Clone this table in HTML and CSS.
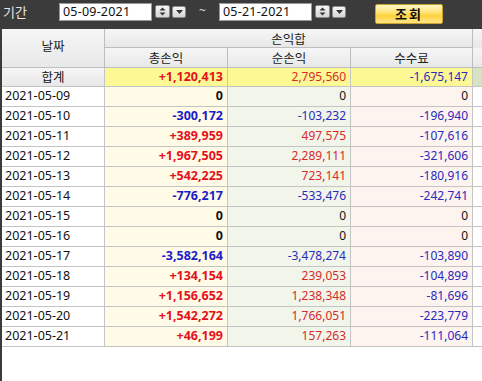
FILE: index.html
```html
<!DOCTYPE html>
<html lang="ko">
<head>
<meta charset="utf-8">
<link rel="stylesheet" href="styles.css">
</head>
<body>
<div class="app">
  <div class="toolbar">
    <span class="label">기간</span>
    <div class="datebox">
      <span class="dateval">05-09-2021</span>
    </div>
    <span class="spin"><svg width="13" height="11" viewBox="0 0 13 11"><path d="M6.5 1.5 L9.5 4.5 L3.5 4.5 Z" fill="#333"/><path d="M3.5 6.5 L9.5 6.5 L6.5 9.5 Z" fill="#333"/></svg></span>
    <span class="drop"><svg width="7" height="4" viewBox="0 0 7 4"><path d="M0 0 H7 L3.5 4 Z" fill="#333"/></svg></span>
    <span class="tilde">~</span>
    <div class="datebox">
      <span class="dateval">05-21-2021</span>
    </div>
    <span class="spin"><svg width="13" height="11" viewBox="0 0 13 11"><path d="M6.5 1.5 L9.5 4.5 L3.5 4.5 Z" fill="#333"/><path d="M3.5 6.5 L9.5 6.5 L6.5 9.5 Z" fill="#333"/></svg></span>
    <span class="drop"><svg width="7" height="4" viewBox="0 0 7 4"><path d="M0 0 H7 L3.5 4 Z" fill="#333"/></svg></span>
    <button class="search">조회</button>
  </div>
  <div class="grid">
    <div class="head">
      <div class="h date">날짜</div>
      <div class="h group">손익합</div>
      <div class="h extra1"></div>
      <div class="h sub">총손익</div>
      <div class="h sub">순손익</div>
      <div class="h sub">수수료</div>
      <div class="h extra2"></div>
    </div>
    <div class="row total">
      <div class="c d">합계</div>
      <div class="c n b red">+1,120,413</div>
      <div class="c n red">2,795,560</div>
      <div class="c n blue">-1,675,147</div>
      <div class="c x"></div>
    </div>
    <div class="row"><div class="c d">2021-05-09</div><div class="c n c2 b">0</div><div class="c n c3">0</div><div class="c n c4">0</div><div class="c x"></div></div>
    <div class="row"><div class="c d">2021-05-10</div><div class="c n c2 b blue">-300,172</div><div class="c n c3 blue">-103,232</div><div class="c n c4 blue">-196,940</div><div class="c x"></div></div>
    <div class="row"><div class="c d">2021-05-11</div><div class="c n c2 b red">+389,959</div><div class="c n c3 red">497,575</div><div class="c n c4 blue">-107,616</div><div class="c x"></div></div>
    <div class="row"><div class="c d">2021-05-12</div><div class="c n c2 b red">+1,967,505</div><div class="c n c3 red">2,289,111</div><div class="c n c4 blue">-321,606</div><div class="c x"></div></div>
    <div class="row"><div class="c d">2021-05-13</div><div class="c n c2 b red">+542,225</div><div class="c n c3 red">723,141</div><div class="c n c4 blue">-180,916</div><div class="c x"></div></div>
    <div class="row"><div class="c d">2021-05-14</div><div class="c n c2 b blue">-776,217</div><div class="c n c3 blue">-533,476</div><div class="c n c4 blue">-242,741</div><div class="c x"></div></div>
    <div class="row"><div class="c d">2021-05-15</div><div class="c n c2 b">0</div><div class="c n c3">0</div><div class="c n c4">0</div><div class="c x"></div></div>
    <div class="row"><div class="c d">2021-05-16</div><div class="c n c2 b">0</div><div class="c n c3">0</div><div class="c n c4">0</div><div class="c x"></div></div>
    <div class="row"><div class="c d">2021-05-17</div><div class="c n c2 b blue">-3,582,164</div><div class="c n c3 blue">-3,478,274</div><div class="c n c4 blue">-103,890</div><div class="c x"></div></div>
    <div class="row"><div class="c d">2021-05-18</div><div class="c n c2 b red">+134,154</div><div class="c n c3 red">239,053</div><div class="c n c4 blue">-104,899</div><div class="c x"></div></div>
    <div class="row"><div class="c d">2021-05-19</div><div class="c n c2 b red">+1,156,652</div><div class="c n c3 red">1,238,348</div><div class="c n c4 blue">-81,696</div><div class="c x"></div></div>
    <div class="row"><div class="c d">2021-05-20</div><div class="c n c2 b red">+1,542,272</div><div class="c n c3 red">1,766,051</div><div class="c n c4 blue">-223,779</div><div class="c x"></div></div>
    <div class="row"><div class="c d">2021-05-21</div><div class="c n c2 b red">+46,199</div><div class="c n c3 red">157,263</div><div class="c n c4 blue">-111,064</div><div class="c x"></div></div>
  </div>
</div>
</body>
</html>
```

FILE: styles.css
```css
* { box-sizing: border-box; }
html, body { margin: 0; padding: 0; }
body {
  width: 482px;
  height: 381px;
  background: #3b3b3b;
  font-family: "Noto Sans", "Noto Sans CJK KR", sans-serif;
  overflow: hidden;
}
.app { display: flex; flex-direction: column; height: 381px; }
.toolbar {
  height: 29px;
  display: flex;
  align-items: flex-start;
  padding-top: 3px;
  color: #e6e6e6;
}
.label {
  font-family: "Noto Sans CJK KR", sans-serif;
  font-size: 13px;
  line-height: 18px;
  margin-left: 3px;
  width: 56px;
}
.datebox {
  width: 93px;
  height: 18px;
  background: #fff;
  border: 1px solid #9a9a9a;
  color: #111;
  font-family: "Noto Sans", sans-serif;
  font-size: 12.5px;
  line-height: 16px;
  padding-left: 3px;
  letter-spacing: 0.2px;
}
.spin {
  margin-left: 3px;
  margin-top: 2px;
  width: 15px;
  height: 13px;
  background: linear-gradient(#f6f6f6, #d4d4d4);
  border: 1px solid #8c8c8c;
  border-radius: 2px;
  display: flex;
  align-items: center;
  justify-content: center;
}
.drop {
  margin-left: 2px;
  margin-top: 3px;
  width: 14px;
  height: 12px;
  background: linear-gradient(#f6f6f6, #d4d4d4);
  border: 1px solid #8c8c8c;
  border-radius: 2px;
  display: flex;
  align-items: center;
  justify-content: center;
}
.tilde {
  width: 33px;
  text-align: center;
  font-size: 12px;
  line-height: 16px;
  color: #ddd;
}
.search {
  margin-left: 29px;
  width: 68px;
  height: 20px;
  margin-top: 1px;
  border: 1px solid #c9a22a;
  border-radius: 2px;
  background: linear-gradient(#fff7c8 0%, #ffe37a 40%, #ffd23c 60%, #ffe58c 100%);
  font-family: "Noto Sans CJK KR", sans-serif;
  font-weight: bold;
  font-size: 13px;
  letter-spacing: 2px;
  color: #111;
  padding: 0;
  line-height: 18px;
}
.grid {
  flex: 1;
  margin-left: 2px;
  background: #fff;
  font-size: 12px;
}
.head {
  display: grid;
  grid-template-columns: 103px 123px 123px 122px 1fr;
  grid-template-rows: 19px 20px;
}
.h {
  background: linear-gradient(#f6f6f6, #e8e8e8);
  border-right: 1px solid #bdbdbd;
  border-bottom: 1px solid #bdbdbd;
  font-family: "Noto Sans CJK KR", sans-serif;
  font-size: 12.5px;
  color: #222;
  display: flex;
  align-items: center;
  justify-content: center;
}
.h.date { grid-row: 1 / span 2; grid-column: 1; padding-bottom: 6px; }
.h.group { grid-column: 2 / span 3; }
.h.extra1 { grid-column: 5; grid-row: 1; border-right: none; border-bottom: none; }
.h.extra2 { grid-column: 5; grid-row: 2; border-right: none; }
.row {
  display: grid;
  grid-template-columns: 103px 123px 123px 122px 1fr;
  height: 20px;
}
.row.total { height: 19px; }
.c {
  border-right: 1px solid #c4c4c4;
  border-bottom: 1px solid #c4c4c4;
  line-height: 18px;
  white-space: nowrap;
  color: #111;
}
.c.d { padding-left: 3px; font-size: 12.5px; }
.c.n { text-align: right; padding-right: 4px; }
.c.x { border-right: none; }
.c2 { background: #fffbe6; }
.c3 { background: #f1f5ea; }
.c4 { background: #fdf3ef; }
.b { font-weight: bold; font-size: 12.5px; }
.red { color: #e4101c; }
.blue { color: #1c1cc8; }
.c3.red, .c4.red, .total .c.n.red:not(.b) { color: #d82a2a; }
.c3.blue, .c4.blue, .total .c.n.blue { color: #2a2ac0; }
.total .c { background: #fcf894; }
.total .c.d {
  background: linear-gradient(#f6f6f6, #e8e8e8);
  text-align: center;
  padding-left: 0;
  font-family: "Noto Sans CJK KR", sans-serif;
  font-size: 12.5px;
}
.total .c.x { background: #d6e3c2; }
```
